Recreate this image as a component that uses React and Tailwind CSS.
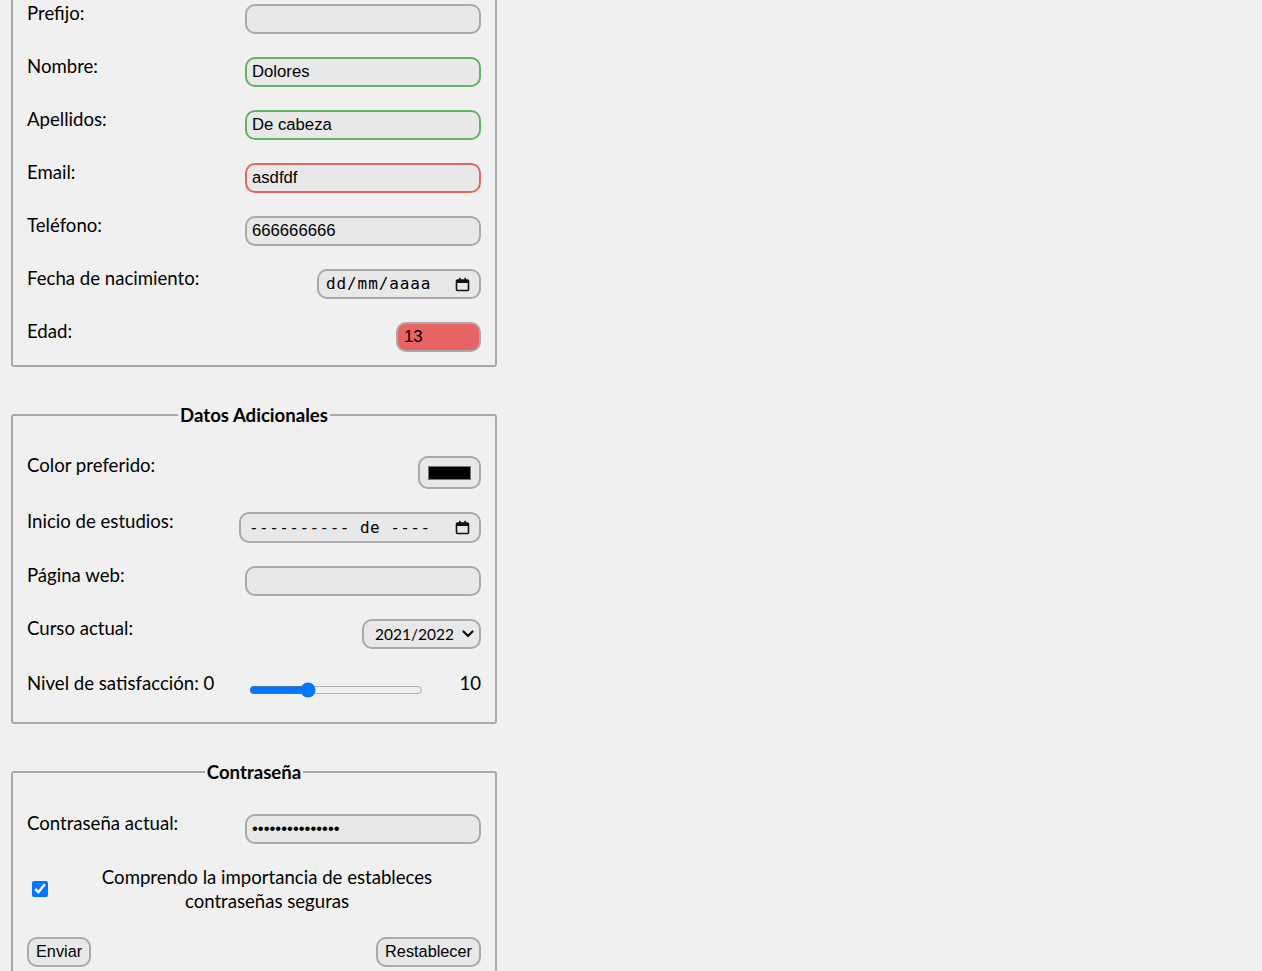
import React from 'react';

// calendar glyph used by the date / month pickers
const CalendarIcon = () => (
  <svg width="15" height="15" viewBox="0 0 15 15" className="shrink-0">
    <rect x="1.5" y="3" width="12" height="10.5" rx="1" fill="none" stroke="#111" strokeWidth="1.6" />
    <rect x="1.5" y="3" width="12" height="3" fill="#111" />
    <rect x="4" y="0.8" width="1.6" height="3" fill="#111" />
    <rect x="9.4" y="0.8" width="1.6" height="3" fill="#111" />
  </svg>
);

const Row = ({ label, children, className = '' }) => (
  <div className={`flex items-start justify-between ${className}`}>
    <span className="leading-[1.2]">{label}</span>
    <div className="mt-[2px]">{children}</div>
  </div>
);

const TextInput = ({ value = '', type = 'text', className = 'w-[236px] border-[#a9a9a9] bg-[#e8e8e8]' }) => (
  <input
    type={type}
    readOnly
    defaultValue={value}
    className={`block h-[30px] border-2 rounded-[10px] pl-[5px] pr-[5px] text-[16.7px] text-black outline-none font-['Liberation_Sans',Arial,sans-serif] ${className}`}
  />
);

export default function App() {
  return (
    <div className="min-h-screen bg-[#f0f0f0] text-black font-['Lato',sans-serif] text-[18.6px] overflow-hidden">
      <div className="w-[486px] ml-[11px] flex flex-col -mt-[20px]">
        {/* Datos personales (top is scrolled out of view) */}
        <fieldset className="border-2 border-[#a9a9a9] rounded-[3px] pl-[14px] pr-[14px] pt-[20px] pb-[13px]">
          <div className="flex flex-col gap-[21px]">
            <Row label="Prefijo:">
              <TextInput />
            </Row>
            <Row label="Nombre:">
              <TextInput value="Dolores" className="w-[236px] border-[#62b262] bg-[#e8e8e8]" />
            </Row>
            <Row label="Apellidos:">
              <TextInput value="De cabeza" className="w-[236px] border-[#62b262] bg-[#e8e8e8]" />
            </Row>
            <Row label="Email:">
              <TextInput value="asdfdf" className="w-[236px] border-[#e46464] bg-[#e8e8e8]" />
            </Row>
            <Row label="Teléfono:">
              <TextInput value="666666666" />
            </Row>
            <Row label="Fecha de nacimiento:">
              <div className="w-[164px] h-[30px] border-2 border-[#a9a9a9] rounded-[10px] bg-[#e8e8e8] flex items-center justify-between pl-[7px] pr-[9px]">
                <span className="font-['DejaVu_Sans_Mono',monospace] text-[16px] tracking-[0.9px]">dd/mm/aaaa</span>
                <CalendarIcon />
              </div>
            </Row>
            <Row label="Edad:">
              <TextInput value="13" className="w-[85px] border-[#a9a9a9] bg-[#e86464] pl-[6px]" />
            </Row>
          </div>
        </fieldset>

        {/* Datos adicionales */}
        <fieldset className="mt-[37px] border-2 border-[#a9a9a9] rounded-[3px] pl-[14px] pr-[14px] pt-[28px] pb-[18px]">
          <legend className="mx-auto px-[2px] font-bold leading-[1.2]">Datos Adicionales</legend>
          <div className="flex flex-col gap-[21px]">
            <Row label="Color preferido:">
              <div className="w-[63px] h-[33px] border-2 border-[#a9a9a9] rounded-[10px] bg-[#e8e8e8] flex items-center justify-center">
                <span className="block w-[43px] h-[14px] bg-black border border-[#777]" />
              </div>
            </Row>
            <Row label="Inicio de estudios:">
              <div className="w-[242px] h-[31px] border-2 border-[#a9a9a9] rounded-[10px] bg-[#e8e8e8] flex items-center justify-between pl-[8px] pr-[9px]">
                <span className="font-['DejaVu_Sans_Mono',monospace] text-[16px] tracking-[0.45px] whitespace-pre">---------- de ----</span>
                <CalendarIcon />
              </div>
            </Row>
            <Row label="Página web:">
              <TextInput type="url" />
            </Row>
            <Row label="Curso actual:">
              <div className="w-[119px] h-[30px] border-2 border-[#a9a9a9] rounded-[10px] bg-[#e8e8e8] flex items-center justify-between pl-[11px] pr-[5px]">
                <span className="text-[15.5px]">2021/2022</span>
                <svg width="12" height="8" viewBox="0 0 12 8">
                  <polyline points="1.5,1.5 6,6 10.5,1.5" fill="none" stroke="#111" strokeWidth="2.2" strokeLinecap="round" strokeLinejoin="round" />
                </svg>
              </div>
            </Row>
            <div className="flex items-start justify-between h-[32px] mt-[2px]">
              <span className="leading-[1.2]">Nivel de satisfacción: 0</span>
              <div className="w-[236px] flex items-start justify-between">
                <input type="range" min="0" max="10" step="any" defaultValue="3.2" className="w-[174px] h-[16px] ml-[4px] mt-[10px]" />
                <span className="leading-[1.2]">10</span>
              </div>
            </div>
          </div>
        </fieldset>

        {/* Contraseña */}
        <fieldset className="mt-[37px] border-2 border-[#a9a9a9] rounded-[3px] pl-[14px] pr-[14px] pt-[28px] pb-[20px]">
          <legend className="mx-auto px-[2px] font-bold leading-[1.2]">Contraseña</legend>
          <div className="flex flex-col">
            <Row label="Contraseña actual:">
              <TextInput type="password" value="contrasena12345" />
            </Row>
            <label className="flex items-center mt-[21px]">
              <input type="checkbox" defaultChecked className="w-4 h-4 ml-[5px] shrink-0" />
              <span className="flex-1 text-center leading-[24px] pl-[5px]">
                Comprendo la importancia de estableces contraseñas seguras
              </span>
            </label>
            <div className="flex justify-between mt-[24px]">
              <button className="h-[30px] px-[7px] border-2 border-[#a9a9a9] rounded-[10px] bg-[#e8e8e8] text-[16.3px] font-['Liberation_Sans',Arial,sans-serif]">
                Enviar
              </button>
              <button className="h-[30px] px-[7px] border-2 border-[#a9a9a9] rounded-[10px] bg-[#e8e8e8] text-[16.3px] font-['Liberation_Sans',Arial,sans-serif]">
                Restablecer
              </button>
            </div>
          </div>
        </fieldset>
      </div>
    </div>
  );
}
